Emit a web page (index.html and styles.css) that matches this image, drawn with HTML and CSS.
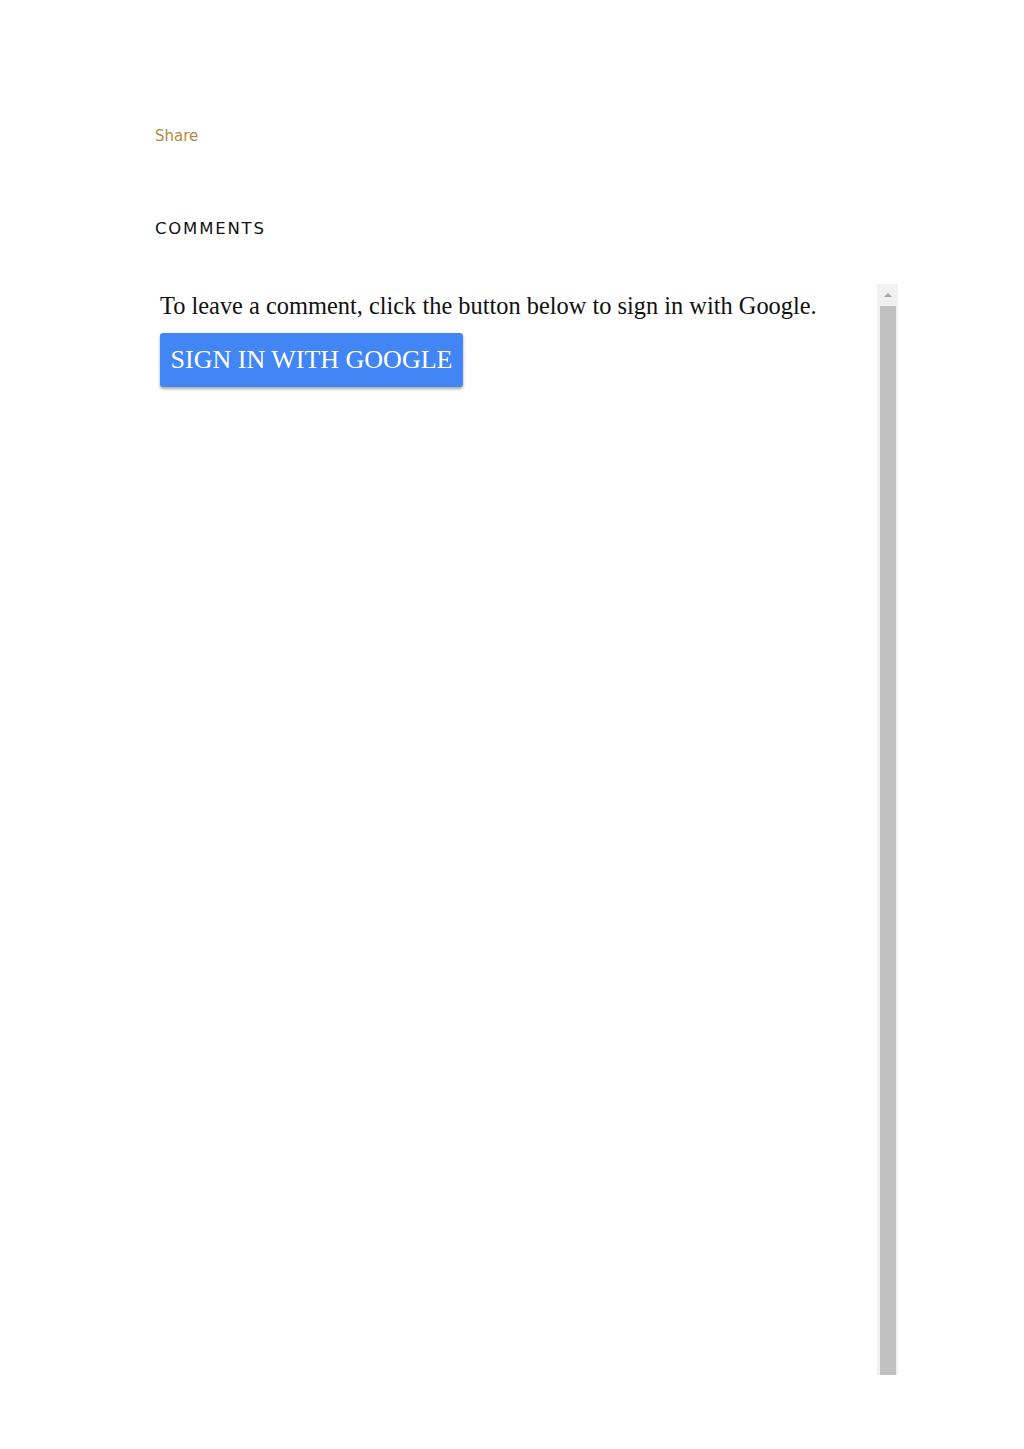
FILE: index.html
```html
<!DOCTYPE html>
<html>
<head>
<meta charset="utf-8">
<link rel="stylesheet" href="styles.css">
</head>
<body>
<div class="page">
  <a class="share">Share</a>
  <h3 class="comments-title">COMMENTS</h3>
  <div class="frame">
    <div class="frame-body">
      <p class="prompt">To leave a comment, click the button below to sign in with Google.</p>
      <button class="signin">SIGN IN WITH GOOGLE</button>
    </div>
    <div class="scrollbar">
      <div class="sb-up"><span class="arrow"></span></div>
      <div class="sb-thumb"></div>
    </div>
  </div>
</div>
</body>
</html>
```
FILE: styles.css
```css
html, body {
  margin: 0;
  padding: 0;
  background: #fff;
}
.page {
  padding: 126px 0 0 155px;
  width: 743px;
}
.share {
  display: block;
  font-family: "DejaVu Sans", sans-serif;
  font-size: 15px;
  line-height: 20px;
  color: #b58a3c;
}
.comments-title {
  margin: 72px 0 0 0;
  font-family: "DejaVu Sans", sans-serif;
  font-weight: 400;
  font-size: 16.5px;
  letter-spacing: 1.8px;
  line-height: 22px;
  color: #111;
}
.frame {
  margin-top: 44px;
  height: 1091px;
  display: flex;
}
.frame-body {
  flex: 1;
  padding: 5px 0 0 5px;
}
.prompt {
  margin: 0;
  font-family: "Liberation Serif", serif;
  font-size: 24.4px;
  line-height: 34px;
  color: #111;
}
.signin {
  margin-top: 10px;
  width: 303px;
  height: 54px;
  padding: 0;
  border: none;
  border-radius: 3px;
  background: #4285f4;
  color: #fff;
  font-family: "Liberation Serif", serif;
  font-size: 26px;
  box-shadow: 0 2px 3px rgba(0,0,0,0.35);
}
.scrollbar {
  width: 21px;
  background: #f1f1f1;
  display: flex;
  flex-direction: column;
  align-items: center;
}
.sb-up {
  height: 22px;
  width: 100%;
  display: flex;
  align-items: center;
  justify-content: center;
}
.arrow {
  width: 0;
  height: 0;
  border-left: 4px solid transparent;
  border-right: 4px solid transparent;
  border-bottom: 4px solid #a3a3a3;
}
.sb-thumb {
  width: 16px;
  flex: 1;
  background: #c1c1c1;
}
```
